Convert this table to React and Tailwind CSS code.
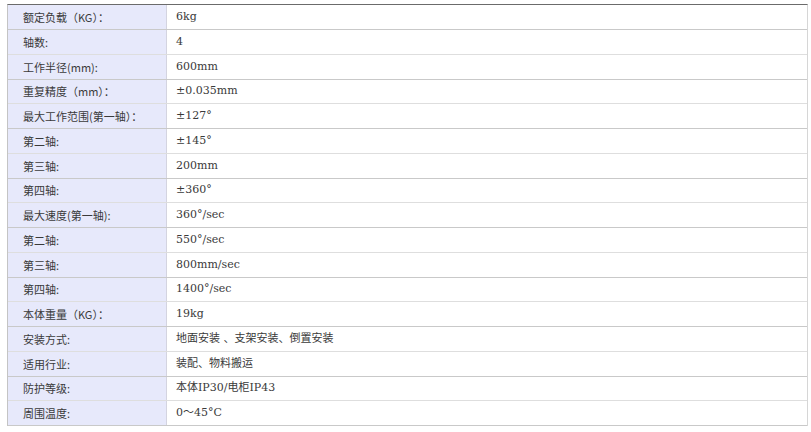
import React from 'react';

const SPECS = [
  ['额定负载（KG）：', '6kg'],
  ['轴数:', '4'],
  ['工作半径(mm):', '600mm'],
  ['重复精度（mm）：', '±0.035mm'],
  ['最大工作范围(第一轴）：', '±127°'],
  ['第二轴:', '±145°'],
  ['第三轴:', '200mm'],
  ['第四轴:', '±360°'],
  ['最大速度(第一轴):', '360°/sec'],
  ['第二轴:', '550°/sec'],
  ['第三轴:', '800mm/sec'],
  ['第四轴:', '1400°/sec'],
  ['本体重量（KG）：', '19kg'],
  ['安装方式:', '地面安装 、支架安装、倒置安装'],
  ['适用行业:', '装配、物料搬运'],
  ['防护等级:', '本体IP30/电柜IP43'],
  ['周围温度:', '0～45°C'],
];

export default function App() {
  return (
    <div className="w-[811px] h-[432px] bg-white pt-[4px] pl-[7px]">
      <div className="w-[801px] border-t border-t-[#6b6b6b] border-l border-l-[#c4c4c4] border-r border-r-[#d6d6d6]">
        {SPECS.map(([label, value], i) => (
          <div
            key={i}
            className={`flex border-b ${i % 2 === 0 ? 'border-[#c9c9c9]' : 'border-[#dedede]'} ${i % 4 === 3 ? 'h-[24px]' : 'h-[25px]'}`}
          >
            <div className="w-[159px] shrink-0 bg-[#e7e9fb] border-r border-[#d4d4e0] flex items-center pl-[15px] text-[11px] text-[#3a3a3a] font-['Noto_Sans_CJK_SC',sans-serif]">
              {label}
            </div>
            <div className="flex-1 flex items-center pl-[9px] text-[11px] text-[#3a3a3a] font-['DejaVu_Serif','Noto_Sans_CJK_SC',serif]">
              {value}
            </div>
          </div>
        ))}
      </div>
    </div>
  );
}
